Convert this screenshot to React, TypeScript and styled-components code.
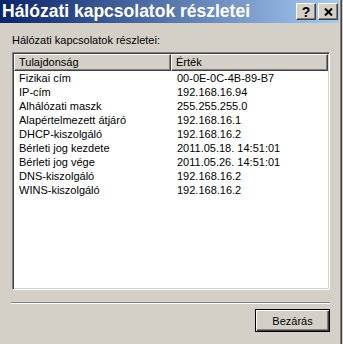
import React from 'react';
import styled, { createGlobalStyle } from 'styled-components';

const colours = {
  face: '#d4d0c8',
  shadow: '#808080',
  darkShadow: '#404040',
  highlight: '#ffffff',
  text: '#000000',
};

const GlobalStyle = createGlobalStyle`
  html, body {
    margin: 0;
    padding: 0;
    background: ${colours.face};
  }
  body {
    font-family: Tahoma, "Liberation Sans", Arial, sans-serif;
    font-size: 11px;
    color: ${colours.text};
  }
`;

const Window = styled.div`
  width: 340px;
  height: 344px;
  background: ${colours.face};
  border-right: 1px solid ${colours.shadow};
  box-shadow: 1px 0 0 ${colours.darkShadow};
  display: flex;
  flex-direction: column;
  overflow: hidden;
`;

const TitleBar = styled.div`
  height: 23px;
  margin-right: 1px;
  display: flex;
  align-items: center;
  background: linear-gradient(to right, #0a246a, #a6caf0);
`;

const Title = styled.h1`
  flex: 1;
  margin: 0;
  padding-left: 2px;
  font-family: "Liberation Sans", Arial, sans-serif;
  font-size: 17.5px;
  line-height: 23px;
  font-weight: bold;
  color: #ffffff;
  white-space: nowrap;
`;

const CaptionButtons = styled.div`
  display: flex;
  gap: 2px;
  margin-right: 1px;
  align-self: flex-start;
  margin-top: 3px;
`;

const CaptionButton = styled.div`
  width: 20px;
  height: 17px;
  box-sizing: border-box;
  background: ${colours.face};
  border-top: 1px solid ${colours.highlight};
  border-left: 1px solid ${colours.highlight};
  border-right: 1px solid ${colours.darkShadow};
  border-bottom: 1px solid ${colours.darkShadow};
  box-shadow: inset -1px -1px 0 ${colours.shadow};
  display: flex;
  align-items: center;
  justify-content: center;
  font-family: "Liberation Sans", Arial, sans-serif;
  font-weight: bold;
  font-size: 14px;
  line-height: 1;
`;

const Content = styled.div`
  flex: 1;
  display: flex;
  flex-direction: column;
  padding: 0 10px 0 12px;
`;

const Label = styled.div`
  margin-top: 10px;
  height: 14px;
  line-height: 14px;
`;

const ListBox = styled.div`
  margin-top: 5px;
  height: 238px;
  box-sizing: border-box;
  background: #ffffff;
  border-top: 1px solid ${colours.shadow};
  border-left: 1px solid ${colours.shadow};
  border-right: 1px solid ${colours.highlight};
  border-bottom: 1px solid ${colours.highlight};
  box-shadow: inset 1px 1px 0 ${colours.darkShadow}, inset -1px -1px 0 ${colours.face};
  padding: 1px;
  overflow: hidden;
`;

const Grid = styled.div`
  display: grid;
  grid-template-columns: 157px 1fr;
`;

const HeaderCell = styled.div`
  height: 17px;
  box-sizing: border-box;
  background: ${colours.face};
  border-top: 1px solid ${colours.highlight};
  border-left: 1px solid ${colours.highlight};
  border-right: 1px solid ${colours.darkShadow};
  border-bottom: 1px solid ${colours.darkShadow};
  box-shadow: inset -1px -1px 0 ${colours.shadow};
  padding-left: 4px;
  line-height: 15px;
  white-space: nowrap;
`;

const Cell = styled.div<{ $first?: boolean }>`
  height: 14px;
  line-height: 14px;
  padding-left: ${p => (p.$first ? '5px' : '6px')};
  white-space: nowrap;
`;

const Separator = styled.div`
  margin: 12px 0 0 -1px;
  width: 319px;
  height: 1px;
  background: ${colours.shadow};
  border-bottom: 1px solid ${colours.highlight};
`;

const Footer = styled.div`
  display: flex;
  justify-content: flex-end;
  margin-top: 5px;
`;

const Button = styled.button`
  width: 75px;
  height: 23px;
  box-sizing: border-box;
  padding: 0;
  background: ${colours.face};
  border: 1px solid #000000;
  box-shadow: inset 1px 1px 0 ${colours.highlight}, inset -1px -1px 0 ${colours.darkShadow},
    inset -2px -2px 0 ${colours.shadow};
  font-family: Tahoma, "Liberation Sans", Arial, sans-serif;
  font-size: 11px;
  color: ${colours.text};
`;

const rows: [string, string][] = [
  ['Fizikai cím', '00-0E-0C-4B-89-B7'],
  ['IP-cím', '192.168.16.94'],
  ['Alhálózati maszk', '255.255.255.0'],
  ['Alapértelmezett átjáró', '192.168.16.1'],
  ['DHCP-kiszolgáló', '192.168.16.2'],
  ['Bérleti jog kezdete', '2011.05.18. 14:51:01'],
  ['Bérleti jog vége', '2011.05.26. 14:51:01'],
  ['DNS-kiszolgáló', '192.168.16.2'],
  ['WINS-kiszolgáló', '192.168.16.2'],
];

const CloseGlyph = () => (
  <svg width="9" height="8" viewBox="0 0 9 8">
    <path d="M1 0.5 L8 7.5 M8 0.5 L1 7.5" stroke="#000" strokeWidth="2" />
  </svg>
);

const App: React.FunctionComponent = () => (
  <>
    <GlobalStyle />
    <Window>
      <TitleBar>
        <Title>Hálózati kapcsolatok részletei</Title>
        <CaptionButtons>
          <CaptionButton>?</CaptionButton>
          <CaptionButton>
            <CloseGlyph />
          </CaptionButton>
        </CaptionButtons>
      </TitleBar>
      <Content>
        <Label>Hálózati kapcsolatok részletei:</Label>
        <ListBox>
          <Grid>
            <HeaderCell>Tulajdonság</HeaderCell>
            <HeaderCell>Érték</HeaderCell>
            {rows.map(([name, value]) => (
              <React.Fragment key={name}>
                <Cell $first>{name}</Cell>
                <Cell>{value}</Cell>
              </React.Fragment>
            ))}
          </Grid>
        </ListBox>
        <Separator />
        <Footer>
          <Button>Bezárás</Button>
        </Footer>
      </Content>
    </Window>
  </>
);

export default App;
